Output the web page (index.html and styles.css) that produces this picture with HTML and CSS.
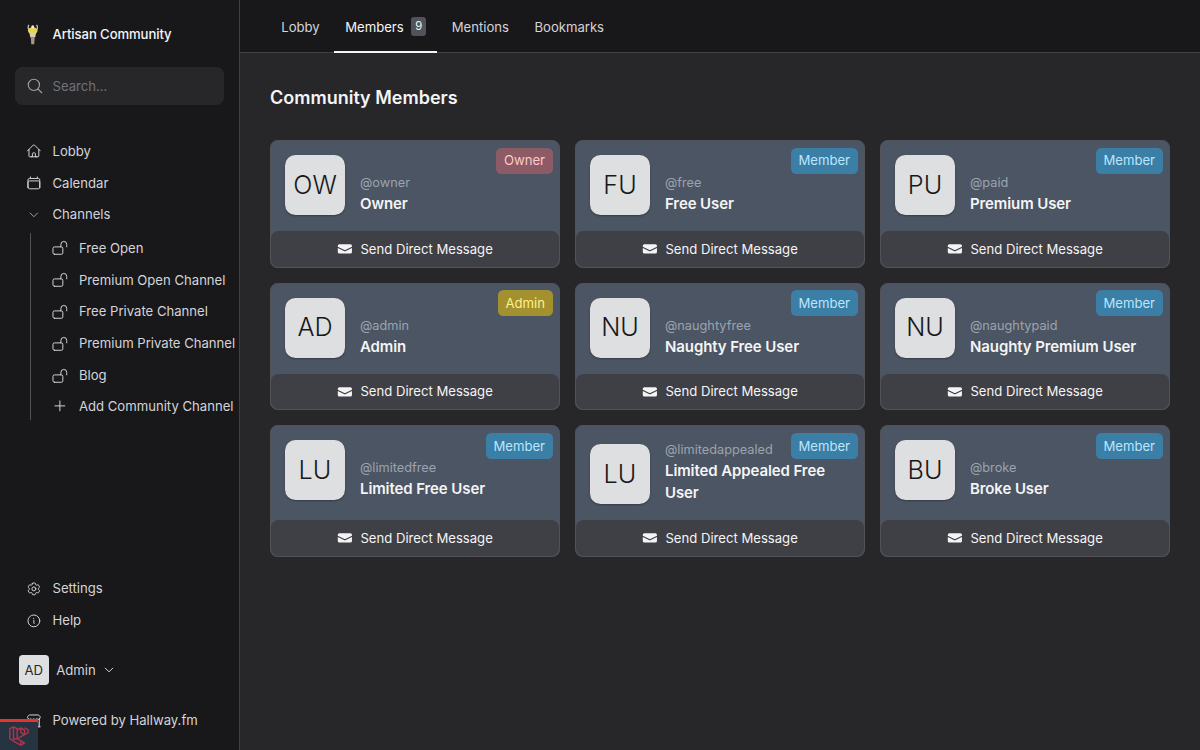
FILE: index.html
```html
<!DOCTYPE html>
<html lang="en">

<head>
    <meta charset="UTF-8">
    <meta name="viewport" content="width=device-width, initial-scale=1.0">
    <title>Community Members</title>
    <link rel="stylesheet" href="styles.css">
</head>

<body>
    <svg class="sprite" xmlns="http://www.w3.org/2000/svg">
        <symbol id="i-home" viewBox="0 0 24 24"><path d="M2.25 12l8.954-8.955c.44-.439 1.152-.439 1.591 0L21.75 12M4.5 9.75v10.125c0 .621.504 1.125 1.125 1.125H9.75v-4.875c0-.621.504-1.125 1.125-1.125h2.25c.621 0 1.125.504 1.125 1.125V21h4.125c.621 0 1.125-.504 1.125-1.125V9.75M8.25 21h8.25"/></symbol>
        <symbol id="i-calendar" viewBox="0 0 24 24"><path d="M6.75 3v2.25M17.25 3v2.25M3 18.75V7.5a2.25 2.25 0 012.25-2.25h13.5A2.25 2.25 0 0121 7.5v11.25m-18 0A2.25 2.25 0 005.25 21h13.5A2.25 2.25 0 0021 18.75m-18 0v-7.5A2.25 2.25 0 015.25 9h13.5A2.25 2.25 0 0121 11.25v7.5"/></symbol>
        <symbol id="i-chevron" viewBox="0 0 24 24"><path d="M19.5 8.25l-7.5 7.5-7.5-7.5"/></symbol>
        <symbol id="i-lock" viewBox="0 0 24 24"><path d="M13.5 10.5V6.75a4.5 4.5 0 119 0v3.75M3.75 21.75h10.5a2.25 2.25 0 002.25-2.25v-6.75a2.25 2.25 0 00-2.25-2.25H3.75a2.25 2.25 0 00-2.25 2.25v6.75a2.25 2.25 0 002.25 2.25z"/></symbol>
        <symbol id="i-plus" viewBox="0 0 24 24"><path d="M12 4.5v15m7.5-7.5h-15"/></symbol>
        <symbol id="i-cog" viewBox="0 0 24 24"><path d="M9.594 3.94c.09-.542.56-.94 1.11-.94h2.593c.55 0 1.02.398 1.11.94l.213 1.281c.063.374.313.686.645.87.074.04.147.083.22.127.324.196.72.257 1.075.124l1.217-.456a1.125 1.125 0 011.37.49l1.296 2.247a1.125 1.125 0 01-.26 1.431l-1.003.827c-.293.24-.438.613-.431.992a6.759 6.759 0 010 .255c-.007.378.138.75.43.99l1.005.828c.424.35.534.954.26 1.43l-1.298 2.247a1.125 1.125 0 01-1.369.491l-1.217-.456c-.355-.133-.75-.072-1.076.124a6.57 6.57 0 01-.22.128c-.331.183-.581.495-.644.869l-.213 1.28c-.09.543-.56.941-1.11.941h-2.594c-.55 0-1.02-.398-1.11-.94l-.213-1.281c-.062-.374-.312-.686-.644-.87a6.52 6.52 0 01-.22-.127c-.325-.196-.72-.257-1.076-.124l-1.217.456a1.125 1.125 0 01-1.369-.49l-1.297-2.247a1.125 1.125 0 01.26-1.431l1.004-.827c.292-.24.437-.613.43-.992a6.932 6.932 0 010-.255c.007-.378-.138-.75-.43-.99l-1.004-.828a1.125 1.125 0 01-.26-1.43l1.297-2.247a1.125 1.125 0 011.37-.491l1.216.456c.356.133.751.072 1.076-.124.072-.044.146-.087.22-.128.332-.183.582-.495.644-.869l.214-1.281z"/><path d="M15 12a3 3 0 11-6 0 3 3 0 016 0z"/></symbol>
        <symbol id="i-info" viewBox="0 0 24 24"><path d="M11.25 11.25l.041-.02a.75.75 0 011.063.852l-.708 2.836a.75.75 0 001.063.853l.041-.021M21 12a9 9 0 11-18 0 9 9 0 0118 0zm-9-3.75h.008v.008H12V8.25z"/></symbol>
        <symbol id="i-search" viewBox="0 0 24 24"><path d="M21 21l-5.197-5.197m0 0A7.5 7.5 0 105.196 5.196a7.5 7.5 0 0010.607 10.607z"/></symbol>
        <symbol id="i-store" viewBox="0 0 24 24"><path d="M13.5 21v-7.5a.75.75 0 01.75-.75h3a.75.75 0 01.75.75V21m-4.5 0H2.36m11.14 0H18m0 0h3.64m-1.39 0V9.349m-16.5 11.65V9.35m0 0a3.001 3.001 0 003.75-.615A2.993 2.993 0 009.75 9.75c.896 0 1.7-.393 2.25-1.016a2.993 2.993 0 002.25 1.016c.896 0 1.699-.393 2.25-1.016a3.001 3.001 0 003.75.614m-16.5 0a3.004 3.004 0 01-.621-4.72L4.318 3.44A1.5 1.5 0 015.378 3h13.243a1.5 1.5 0 011.06.44l1.19 1.189a3 3 0 01-.621 4.72m-13.5 8.65h3.75a.75.75 0 00.75-.75V13.5a.75.75 0 00-.75-.75H6.75a.75.75 0 00-.75.75v3.75c0 .415.336.75.75.75z"/></symbol>
        <symbol id="i-mail" viewBox="0 0 20 20"><path d="M3 4a2 2 0 00-2 2v1.161l8.441 4.221a1.25 1.25 0 001.118 0L19 7.162V6a2 2 0 00-2-2H3z"/><path d="M19 8.839l-7.77 3.885a2.75 2.75 0 01-2.46 0L1 8.839V14a2 2 0 002 2h14a2 2 0 002-2V8.839z"/></symbol>
    </svg>

    <aside class="sidebar">
        <div class="brand">
            <svg class="brand-logo" viewBox="0 0 14 24">
                <path d="M3 3C1.600 5 2 8 4 9M11 3c1.400 2 1 5-1 6" fill="none" stroke="#d6d3c4" stroke-width="1.200"/>
                <ellipse cx="7" cy="9" rx="5" ry="3.600" fill="#e8d44a"/>
                <path d="M3.500 11h7l-1 5h-5z" fill="#d8d0b8"/>
                <path d="M5 16h4l-.5 7h-3z" fill="#a39a86"/>
                <circle cx="7" cy="5" r="1.600" fill="#f1ecd9"/>
            </svg>
            <span>Artisan Community</span>
        </div>

        <label class="search">
            <svg class="icon search-icon"><use href="#i-search"/></svg>
            <span class="search-text">Search...</span>
        </label>

        <ul class="nav">
            <li class="nav-row"><svg class="icon"><use href="#i-home"/></svg>Lobby</li>
            <li class="nav-row"><svg class="icon"><use href="#i-calendar"/></svg>Calendar</li>
            <li class="nav-row"><svg class="icon icon-small"><use href="#i-chevron"/></svg>Channels</li>
        </ul>
        <ul class="channels">
            <li class="nav-row"><svg class="icon"><use href="#i-lock"/></svg>Free Open</li>
            <li class="nav-row"><svg class="icon"><use href="#i-lock"/></svg>Premium Open Channel</li>
            <li class="nav-row"><svg class="icon"><use href="#i-lock"/></svg>Free Private Channel</li>
            <li class="nav-row"><svg class="icon"><use href="#i-lock"/></svg>Premium Private Channel</li>
            <li class="nav-row"><svg class="icon"><use href="#i-lock"/></svg>Blog</li>
            <li class="nav-row"><svg class="icon"><use href="#i-plus"/></svg>Add Community Channel</li>
        </ul>

        <ul class="nav nav-bottom">
            <li class="nav-row"><svg class="icon"><use href="#i-cog"/></svg>Settings</li>
            <li class="nav-row"><svg class="icon"><use href="#i-info"/></svg>Help</li>
        </ul>

        <div class="account">
            <span class="account-avatar">AD</span>
            <span>Admin</span>
            <svg class="icon account-chevron"><use href="#i-chevron"/></svg>
        </div>

        <div class="nav-row powered"><svg class="icon"><use href="#i-store"/></svg>Powered by Hallway.fm</div>
    </aside>

    <div class="content">
        <nav class="tabs">
            <a class="tab">Lobby</a>
            <a class="tab active">Members <span class="tab-count">9</span></a>
            <a class="tab">Mentions</a>
            <a class="tab">Bookmarks</a>
        </nav>

        <main class="members">
            <h1>Community Members</h1>
            <div class="grid">
                <div class="card">
                    <span class="badge owner">Owner</span>
                    <div class="card-body">
                        <span class="avatar">OW</span>
                        <div class="who"><div class="handle">@owner</div><div class="name">Owner</div></div>
                    </div>
                    <a class="dm"><svg class="mail"><use href="#i-mail"/></svg>Send Direct Message</a>
                </div>
                <div class="card">
                    <span class="badge member">Member</span>
                    <div class="card-body">
                        <span class="avatar">FU</span>
                        <div class="who"><div class="handle">@free</div><div class="name">Free User</div></div>
                    </div>
                    <a class="dm"><svg class="mail"><use href="#i-mail"/></svg>Send Direct Message</a>
                </div>
                <div class="card">
                    <span class="badge member">Member</span>
                    <div class="card-body">
                        <span class="avatar">PU</span>
                        <div class="who"><div class="handle">@paid</div><div class="name">Premium User</div></div>
                    </div>
                    <a class="dm"><svg class="mail"><use href="#i-mail"/></svg>Send Direct Message</a>
                </div>
                <div class="card">
                    <span class="badge admin">Admin</span>
                    <div class="card-body">
                        <span class="avatar">AD</span>
                        <div class="who"><div class="handle">@admin</div><div class="name">Admin</div></div>
                    </div>
                    <a class="dm"><svg class="mail"><use href="#i-mail"/></svg>Send Direct Message</a>
                </div>
                <div class="card">
                    <span class="badge member">Member</span>
                    <div class="card-body">
                        <span class="avatar">NU</span>
                        <div class="who"><div class="handle">@naughtyfree</div><div class="name">Naughty Free User</div></div>
                    </div>
                    <a class="dm"><svg class="mail"><use href="#i-mail"/></svg>Send Direct Message</a>
                </div>
                <div class="card">
                    <span class="badge member">Member</span>
                    <div class="card-body">
                        <span class="avatar">NU</span>
                        <div class="who"><div class="handle">@naughtypaid</div><div class="name">Naughty Premium User</div></div>
                    </div>
                    <a class="dm"><svg class="mail"><use href="#i-mail"/></svg>Send Direct Message</a>
                </div>
                <div class="card">
                    <span class="badge member">Member</span>
                    <div class="card-body">
                        <span class="avatar">LU</span>
                        <div class="who"><div class="handle">@limitedfree</div><div class="name">Limited Free User</div></div>
                    </div>
                    <a class="dm"><svg class="mail"><use href="#i-mail"/></svg>Send Direct Message</a>
                </div>
                <div class="card">
                    <span class="badge member">Member</span>
                    <div class="card-body">
                        <span class="avatar">LU</span>
                        <div class="who"><div class="handle">@limitedappealed</div><div class="name">Limited Appealed Free User</div></div>
                    </div>
                    <a class="dm"><svg class="mail"><use href="#i-mail"/></svg>Send Direct Message</a>
                </div>
                <div class="card">
                    <span class="badge member">Member</span>
                    <div class="card-body">
                        <span class="avatar">BU</span>
                        <div class="who"><div class="handle">@broke</div><div class="name">Broke User</div></div>
                    </div>
                    <a class="dm"><svg class="mail"><use href="#i-mail"/></svg>Send Direct Message</a>
                </div>
            </div>
        </main>
    </div>

    <div class="debugbar">
        <svg viewBox="0 0 24 24" fill="none" stroke="#b8324a" stroke-width="1.500" stroke-linejoin="round">
            <path d="M2 4l4-2 4 2v11l8 4.500-4 2.500-8-4.500-4-2.500z"/>
            <path d="M6 2v14M6 16l4-1.500M14 22v-5M10 15l8-4.500v-5l-4-2.300-4 2.300M14 3.200v5l4 2.300 4-2.300v-3l-4-2.200"/>
        </svg>
    </div>
</body>

</html>
```

FILE: styles.css
```css
* {
    padding: 0;
    margin: 0;
    box-sizing: border-box;
}

html {
    font-size: 15px;
}

body {
    display: flex;
    height: 100vh;
    overflow: hidden;
    background-color: #27272a;
    color: #d4d4d8;
    font-family: Inter, "Liberation Sans", sans-serif;
    font-size: 0.875rem;
    line-height: 1.25rem;
}

ul {
    list-style: none;
}

.sprite {
    display: none;
}

.icon {
    flex: none;
    width: 1.05rem;
    height: 1.05rem;
    fill: none;
    stroke: currentColor;
    stroke-width: 1.5;
    stroke-linecap: round;
    stroke-linejoin: round;
}

.icon-small {
    padding: 2px;
}

/* sidebar */
.sidebar {
    display: flex;
    flex: none;
    flex-direction: column;
    width: 16rem;
    padding: 0 1rem;
    background-color: #18181b;
    border-right: 1px solid #3f3f46;
}

.brand {
    display: flex;
    align-items: center;
    gap: 0.85rem;
    height: 2rem;
    margin-top: 1.27rem;
    padding-left: 0.75rem;
    color: #f4f4f5;
    font-weight: 500;
    letter-spacing: -0.08px;
}

.brand-logo {
    width: 0.9rem;
    height: 1.55rem;
}

.search {
    display: flex;
    align-items: center;
    gap: 0.55rem;
    height: 2.5rem;
    margin-top: 1.23rem;
    padding-left: 0.75rem;
    background-color: #27272a;
    border-radius: 0.5rem;
    color: #71717a;
}

.search-icon {
    width: 1.2rem;
    height: 1.2rem;
    color: #a1a1aa;
}

.search-text {
    padding-top: 1px;
}

.nav {
    display: flex;
    flex-direction: column;
    gap: 0.125rem;
    margin-top: 2.07rem;
}

.nav-row {
    display: flex;
    align-items: center;
    gap: 0.75rem;
    height: 2rem;
    padding-left: 0.7rem;
    white-space: nowrap;
}

.channels {
    display: flex;
    flex-direction: column;
    gap: 0.125rem;
    margin: 0.22rem 0 0 1rem;
    border-left: 1px solid #52525b;
}

.channels .nav-row {
    padding-left: 1.4rem;
}

.channels .nav-row:last-child {
    height: 1.85rem;
}

.nav-bottom {
    margin-top: auto;
}

.account {
    display: flex;
    align-items: center;
    gap: 0.5rem;
    margin: 1.3rem 0 0 0.25rem;
}

.account-avatar {
    display: flex;
    align-items: center;
    justify-content: center;
    width: 2rem;
    height: 2rem;
    background-color: #dedfe0;
    border-radius: 0.25rem;
    color: #27272a;
    font-size: 0.875rem;
}

.account-chevron {
    width: 0.8rem;
    height: 0.8rem;
    stroke-width: 2;
}

.powered {
    margin: 1.37rem 0 0.97rem;
}

/* tabs */
.content {
    display: flex;
    flex: 1;
    flex-direction: column;
    min-width: 0;
}

.tabs {
    display: flex;
    gap: 3px;
    height: 3.55rem;
    padding-left: 2rem;
    background-color: #18181b;
    border-bottom: 1px solid #3f3f46;
}

.tab {
    display: flex;
    align-items: center;
    gap: 0.5rem;
    height: 3.5rem;
    padding: 4px 0.75rem 0;
    border-bottom: 2px solid transparent;
    color: #d4d4d8;
}

.tab.active {
    color: #f4f4f5;
    border-bottom-color: #f4f4f5;
}

.tab-count {
    display: flex;
    align-items: center;
    justify-content: center;
    width: 1rem;
    height: 1.25rem;
    margin-top: -2px;
    background-color: #52525b;
    border-radius: 0.2rem;
    font-size: 0.75rem;
}

/* members */
.members {
    padding: 1.97rem 2rem 2rem;
}

h1 {
    margin-bottom: 1.82rem;
    color: #f4f4f5;
    font-size: 1.2rem;
    font-weight: 600;
    line-height: 2rem;
}

.grid {
    display: grid;
    grid-template-columns: repeat(3, 1fr);
    gap: 1rem;
}

.card {
    position: relative;
    display: flex;
    flex-direction: column;
    background-color: #4b5563;
    border: 1px solid #52525b;
    border-radius: 0.5rem;
}

.card-body {
    display: flex;
    align-items: flex-end;
    gap: 1rem;
    padding: calc(1rem - 1px) calc(1rem - 1px) 1.07rem;
}

.avatar {
    display: flex;
    flex: none;
    align-items: center;
    justify-content: center;
    width: 4rem;
    height: 4rem;
    background-color: #dedfe0;
    border-radius: 0.7rem;
    box-shadow: 0 1px 2px rgba(0, 0, 0, 0.3);
    color: #18181b;
    font-size: 1.68rem;
    font-weight: 300;
}

.handle {
    color: #9ca3af;
    font-size: 0.85rem;
    line-height: 20px;
}

.name {
    color: #f4f4f5;
    font-size: 1rem;
    font-weight: 600;
    letter-spacing: -0.1px;
    line-height: 22px;
}

.badge {
    position: absolute;
    top: calc(0.5rem - 1px);
    right: calc(0.5rem - 1px);
    padding: 0.25rem 0.5rem;
    border-radius: 0.35rem;
}

.owner {
    background-color: #8c5b65;
    color: #fecaca;
}

.member {
    background-color: #3b7ea6;
    color: #bae6fd;
}

.admin {
    background-color: #a3912f;
    color: #fef08a;
}

.dm {
    display: flex;
    align-items: center;
    justify-content: center;
    gap: 0.5rem;
    height: 2.37rem;
    margin-top: auto;
    background-color: #3f3f46;
    border-radius: 0.5rem;
    color: #f4f4f5;
}

.mail {
    width: 1.05rem;
    height: 1.05rem;
    fill: currentColor;
}

/* debug bar tab */
.debugbar {
    position: absolute;
    left: 0;
    bottom: 0;
    display: flex;
    align-items: center;
    justify-content: center;
    width: 38px;
    height: 31px;
    background-color: #263442;
    border-top: 3px solid #e3342f;
}

.debugbar svg {
    width: 22px;
    height: 22px;
}
```
